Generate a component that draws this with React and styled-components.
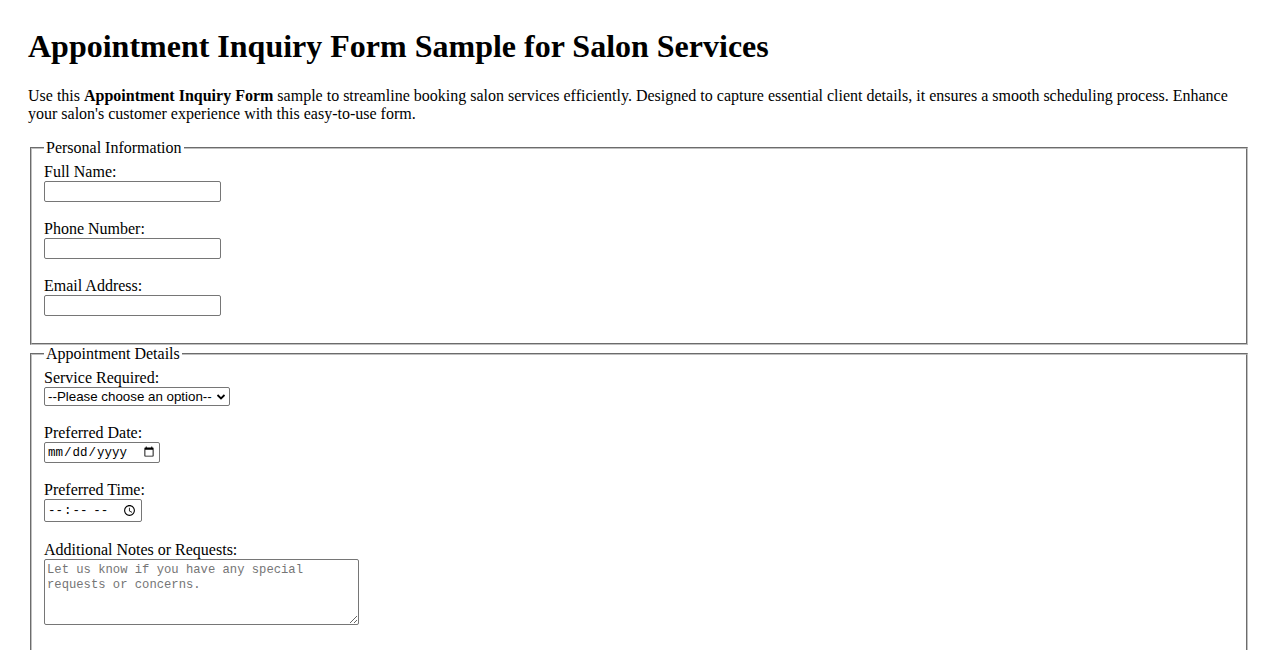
import React from 'react'
import styled, { createGlobalStyle } from 'styled-components'

const GlobalStyle = createGlobalStyle`
  body {
    margin: 0;
    background: #fff;
    color: #000;
    font-family: "Liberation Serif", "Times New Roman", serif;
    font-size: 16px;
  }
`

const Page = styled.div`
  padding: 28px;
`

const Title = styled.h1`
  margin: 0 0 22px;
  font-size: 32px;
  font-weight: bold;
  line-height: normal;
`

const Intro = styled.p`
  margin: 0 0 16px;
  line-height: 18px;
`

const Form = styled.form`
  display: flex;
  flex-direction: column;
`

/* groove on white reads as one thin grey line, like the browser default */
const Section = styled.fieldset`
  margin: 0 2px;
  padding: 6px 12px 9px;
  border: 2px groove #c0c0c0;
  min-width: 0;
`

const Legend = styled.legend`
  padding: 0 2px;
  line-height: 18px;
`

const Field = styled.div`
  display: flex;
  flex-direction: column;
  align-items: flex-start;
  margin-bottom: ${p => p.$gap || 18}px;
`

const Label = styled.label`
  display: block;
  line-height: 18px;
  height: 18px;
`

const TextInput = styled.input`
  box-sizing: border-box;
  width: 177px;
  height: 21px;
  margin: 0;
  padding: 1px 2px;
  border: 1px solid #767676;
  border-radius: 2px;
  font-family: "Liberation Sans", Arial, sans-serif;
  font-size: 13.33px;
  background: #fff;
`

const Select = styled.select`
  box-sizing: border-box;
  width: 186px;
  height: 19px;
  margin: 0;
  padding: 0 16px 0 3px;
  border: 1px solid #767676;
  border-radius: 2px;
  font-family: "Liberation Sans", Arial, sans-serif;
  font-size: 13.33px;
  color: #000;
  appearance: none;
  background: #fff
    url("data:image/svg+xml,%3Csvg xmlns='http://www.w3.org/2000/svg' width='10' height='8' viewBox='0 0 10 8'%3E%3Cpath d='M1.5 2l3.5 3.5L8.5 2' fill='none' stroke='%23000' stroke-width='1.8'/%3E%3C/svg%3E")
    no-repeat right 3px center;
`

const DateTime = styled.input`
  box-sizing: border-box;
  width: ${p => p.$w}px;
  height: ${p => p.$h}px;
  margin: 0;
  padding: 1px 2px;
  border: 1px solid #767676;
  border-radius: 2px;
  font-family: "Liberation Mono", "DejaVu Sans Mono", monospace;
  font-size: 12.5px;
  color: #000;
  background: #fff;
`

const Notes = styled.textarea`
  box-sizing: border-box;
  width: 315px;
  height: 66px;
  margin: 0;
  padding: 3px 2px 2px;
  border: 1px solid #767676;
  border-radius: 2px;
  font-family: "Liberation Mono", "DejaVu Sans Mono", monospace;
  font-size: 12.2px;
  line-height: 15px;
  resize: both;
  &::placeholder {
    color: #757575;
  }
`

export default function App() {
  return (
    <Page>
      <GlobalStyle />
      <Title>Appointment Inquiry Form Sample for Salon Services</Title>
      <Intro>
        Use this <b>Appointment Inquiry Form</b> sample to streamline booking salon services
        efficiently. Designed to capture essential client details, it ensures a smooth scheduling
        process. Enhance your salon's customer experience with this easy-to-use form.
      </Intro>
      <Form onSubmit={e => e.preventDefault()}>
        <Section>
          <Legend>Personal Information</Legend>
          <Field>
            <Label htmlFor="name">Full Name:</Label>
            <TextInput id="name" type="text" />
          </Field>
          <Field>
            <Label htmlFor="phone">Phone Number:</Label>
            <TextInput id="phone" type="tel" />
          </Field>
          <Field>
            <Label htmlFor="email">Email Address:</Label>
            <TextInput id="email" type="email" />
          </Field>
        </Section>
        <Section>
          <Legend>Appointment Details</Legend>
          <Field>
            <Label htmlFor="service">Service Required:</Label>
            <Select id="service" defaultValue="">
              <option value="">--Please choose an option--</option>
              <option value="haircut">Haircut</option>
              <option value="coloring">Hair Coloring</option>
              <option value="styling">Styling</option>
              <option value="manicure">Manicure</option>
              <option value="pedicure">Pedicure</option>
            </Select>
          </Field>
          <Field>
            <Label htmlFor="date">Preferred Date:</Label>
            <DateTime id="date" type="date" $w={116} $h={21} />
          </Field>
          <Field $gap={19}>
            <Label htmlFor="time">Preferred Time:</Label>
            <DateTime id="time" type="time" $w={98} $h={23} />
          </Field>
          <Field>
            <Label htmlFor="notes">Additional Notes or Requests:</Label>
            <Notes
              id="notes"
              rows="4"
              cols="40"
              placeholder="Let us know if you have any special requests or concerns."
            />
          </Field>
        </Section>
      </Form>
    </Page>
  )
}
